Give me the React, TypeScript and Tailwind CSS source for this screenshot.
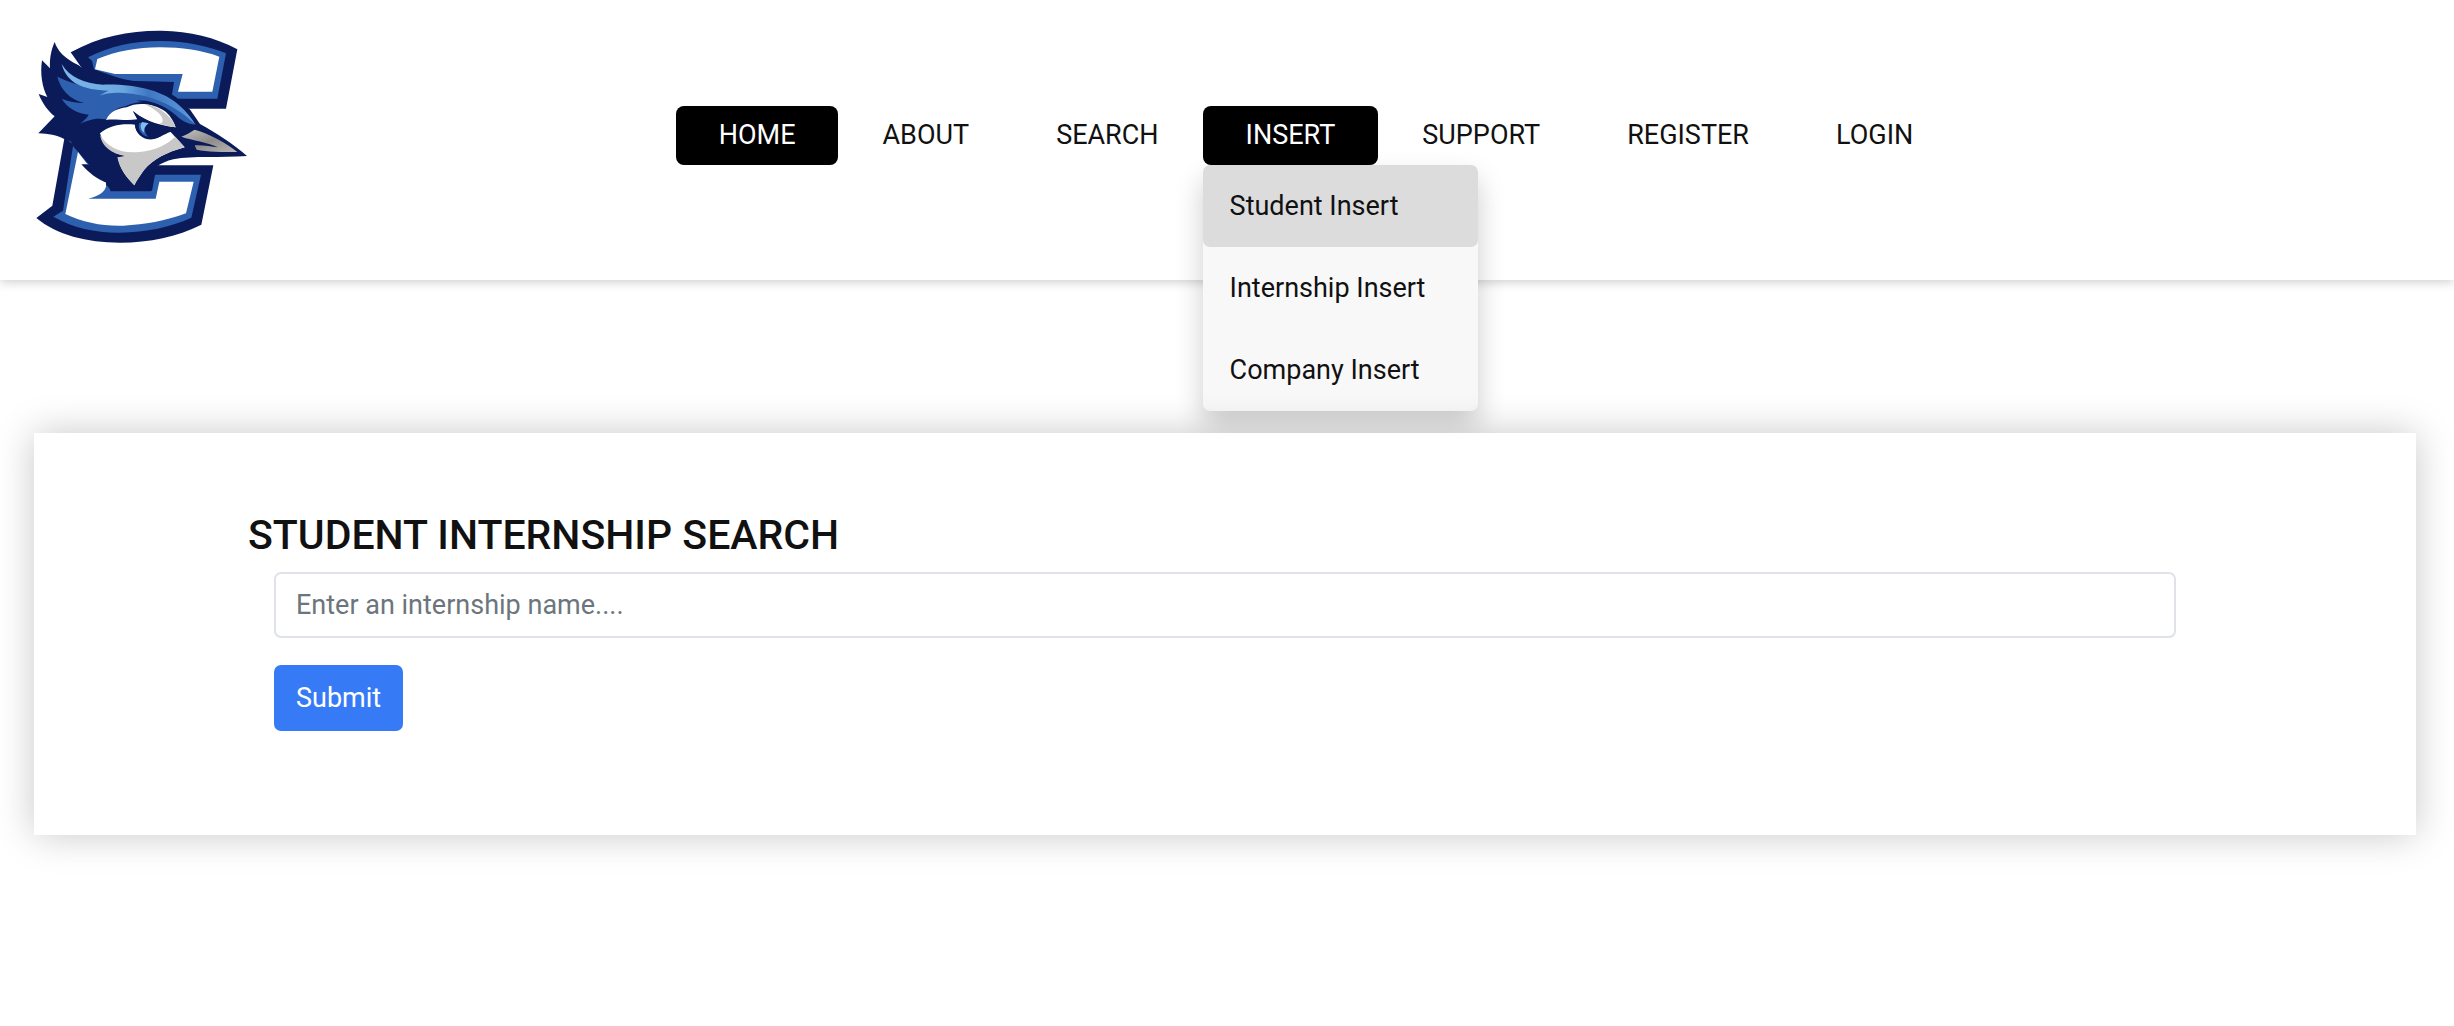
import React from "react";

const NAVY = "#0b1b5a";
const BLUE = "#2d60ae";

function BluejayLogo() {
  return (
    <svg viewBox="0 0 720 690" className="block h-[230px] w-[240px]" role="img" aria-label="Bluejay logo">
      <defs>
        <linearGradient id="crest" x1="0" y1="0" x2="1" y2="0">
          <stop offset="0" stopColor="#7db7ea" />
          <stop offset="0.45" stopColor="#6ca8e0" />
          <stop offset="0.65" stopColor="#3f78c2" />
          <stop offset="1" stopColor="#5c9bdb" />
        </linearGradient>
        <linearGradient id="beak" x1="0" y1="0" x2="1" y2="1">
          <stop offset="0" stopColor="#c4c2c0" />
          <stop offset="0.5" stopColor="#8f8d8c" />
          <stop offset="1" stopColor="#b9b7b5" />
        </linearGradient>
      </defs>

      {/* Upper arm of the letter */}
      <path fill={NAVY} d="M152 97C240 48 330 31 425 32C510 34 585 51 652 88L618 266H508L420 215L200 165Z" />
      <path fill={BLUE} d="M204 112C270 78 345 62 425 63C500 64 560 77 618 100L592 236H470L456 224L462 186L320 182L222 148L216 122Z" />
      <path fill="#fff" d="M232 117C290 94 350 82 420 82C485 82 545 91 598 110L577 215H474L488 162H285L225 148Z" />

      {/* Lower arm of the letter */}
      <path fill={NAVY} d="M134 350L97 557L49 594C110 645 200 668 300 668C390 667 470 651 544 614L580 436H410L300 500Z" />
      <path fill={BLUE} d="M159 378L129 572L100 590C160 624 230 639 300 638C380 636 450 622 514 593L543 464H405L396 512H275L255 490Z" />
      <path fill="#fff" d="M174 396L136 582C190 608 250 619 310 617C375 614 435 603 498 580L521 485H418L407 536H205C232 528 252 520 258 500V470L200 430Z" />

      {/* Head silhouette */}
      <path
        fill={NAVY}
        d="M104 66C112 92 134 116 176 136L192 148C225 160 260 165 312 178L400 195C450 215 490 245 511 270L540 312C590 340 640 372 681 408C600 414 520 406 460 418C440 423 425 430 412 438L400 480L392 514H272L263 490C235 480 205 458 184 433H208L150 364L134 358C110 345 85 341 55 340L104 289C86 275 68 252 56 222L82 231C66 200 60 160 66 121L90 145C88 115 94 88 104 66Z"
      />

      {/* Crest feathers */}
      <path
        fill={BLUE}
        d="M112 170C145 185 170 196 230 202L330 206C420 218 490 255 527 314C500 312 486 302 470 288C430 250 370 232 318 258C290 262 270 278 258 298C225 292 200 302 180 312C198 296 205 288 206 284C170 280 140 262 125 236C150 246 175 250 192 249C150 238 122 210 112 170Z"
      />
      <path
        fill="url(#crest)"
        d="M125 132C150 172 190 190 250 194C350 192 430 212 480 258C500 276 516 296 525 312C470 260 400 222 300 218C270 218 250 222 240 226C255 216 262 214 266 212C190 210 140 190 125 132Z"
      />
      <path fill={NAVY} d="M350 242C400 238 445 262 488 308L500 330L466 326C455 290 420 256 350 242Z" />

      {/* Face */}
      <path fill="#fff" d="M258 300C268 276 290 266 320 262C350 246 400 248 438 276C453 290 462 306 467 322C430 318 380 308 340 274L352 298C320 304 285 296 258 300Z" />
      <path fill="#c9c8c8" d="M372 252C410 256 450 280 467 322C452 320 436 317 420 311C438 306 428 276 372 252Z" />
      <path fill="#fff" d="M240 340C270 314 310 310 345 314C346 345 380 362 410 354C432 346 442 338 452 336L494 382C440 396 400 418 372 450C360 468 350 480 343 496C320 472 300 448 294 414L318 408C275 402 250 376 240 340Z" />
      <path fill="#c9c8c8" d="M240 345C262 382 304 402 358 396C410 390 440 374 466 350L494 382C440 396 400 418 372 450C358 468 350 482 343 496C318 470 300 448 292 412L318 408C274 402 246 380 240 345Z" />

      {/* Eye */}
      <path fill={NAVY} d="M338 272C362 294 400 316 470 326L436 334C428 350 408 360 384 358C358 352 342 330 346 308L352 298Z" />
      <path fill={BLUE} d="M358 308C352 328 364 346 384 350C373 338 370 322 384 310Z" />
      <path fill="#7fc0f0" d="M366 306C358 318 364 334 373 338C370 326 376 318 386 310Z" />

      {/* Beak */}
      <path fill="url(#beak)" d="M484 350C502 344 514 334 524 329C570 342 620 370 652 396C610 396 560 396 530 389L524 376C545 374 574 380 594 382C560 366 520 362 484 350Z" />
    </svg>
  );
}

const navClass =
  "block rounded-[8px] px-[43px] py-[14px] text-[27px] leading-[31px] uppercase whitespace-nowrap";

function NavLink({ label, active = false }: { label: string; active?: boolean }) {
  return (
    <li>
      <a href="#" className={`${navClass} ${active ? "bg-black text-white" : "text-[#111111]"}`}>
        {label}
      </a>
    </li>
  );
}

const insertItems = ["Student Insert", "Internship Insert", "Company Insert"];

export default function App() {
  return (
    <div className="min-h-screen bg-white pb-10 font-[Roboto,sans-serif] text-[#111111]">
      <header className="flex items-center bg-white p-[20px] pb-[30px] shadow-[0_2px_10px_rgba(0,0,0,0.2)]">
        <a href="#" className="shrink-0">
          <BluejayLogo />
        </a>
        <nav className="flex flex-1 justify-center pr-[62px]">
          <ul className="flex gap-px">
            <NavLink label="Home" active />
            <NavLink label="About" />
            <NavLink label="Search" />
            <li className="relative">
              <button type="button" aria-expanded="true" className={`${navClass} bg-black text-white`}>
                Insert
              </button>
              <ul className="absolute top-full left-0 min-w-[275px] rounded-[7px] bg-[#f9f8f9] shadow-[0_14px_28px_rgba(0,0,0,0.2)]">
                {insertItems.map((item, i) => (
                  <li key={item}>
                    <a
                      href="#"
                      className={`block rounded-[7px] px-[27px] py-[20px] text-[27px] leading-[42px] whitespace-nowrap ${i === 0 ? "bg-[#dddcdd]" : ""}`}
                    >
                      {item}
                    </a>
                  </li>
                ))}
              </ul>
            </li>
            <NavLink label="Support" />
            <NavLink label="Register" />
            <NavLink label="Login" />
          </ul>
        </nav>
      </header>

      <main className="relative mt-[153px] mr-[38px] ml-[34px] bg-white px-[214px] pt-[77px] pb-[104px] shadow-[0_0_36px_rgba(0,0,0,0.22)]">
        <h1 className="text-[41px] leading-[50px] font-medium">STUDENT INTERNSHIP SEARCH</h1>
        <form className="mx-[26px] mt-[12px] flex flex-col items-start gap-[27px]" onSubmit={(e) => e.preventDefault()}>
          <input
            type="text"
            aria-label="Internship name"
            placeholder="Enter an internship name...."
            className="h-[66px] w-full rounded-[7px] border-2 border-[#dfe2e6] bg-white px-[20px] text-[27px] text-[#495057] placeholder:text-[#6c757d]"
          />
          <button
            type="submit"
            className="h-[66px] rounded-[7px] bg-[#377af6] px-[22px] text-[27px] text-white"
          >
            Submit
          </button>
        </form>
      </main>
    </div>
  );
}
